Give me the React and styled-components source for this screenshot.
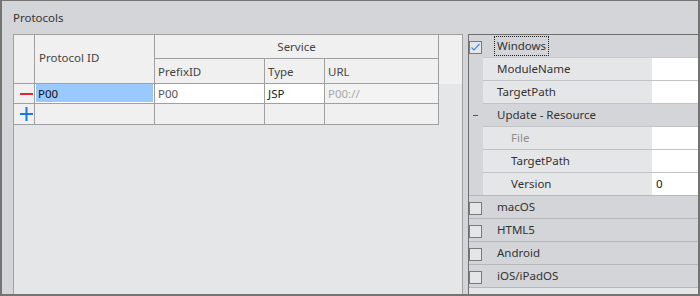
import React from 'react'
import styled, { createGlobalStyle } from 'styled-components'

const GlobalStyle = createGlobalStyle`
  html, body { margin: 0; padding: 0; background: #d4d5d8; }
  body { font-family: "Noto Sans", "Open Sans", sans-serif; font-size: 11.5px; }
  * { box-sizing: border-box; }
`

const Frame = styled.div`
  width: 700px;
  height: 296px;
  display: flex;
  flex-direction: column;
  background: #d4d5d8;
  border-style: solid;
  border-color: #747474;
  border-width: 1px 2px 2px 2px;
  overflow: hidden;
`
const Title = styled.div`
  height: 33px;
  flex: none;
  display: flex;
  align-items: center;
  padding-left: 11px;
  padding-bottom: 1px;
  color: #333;
`
const Body = styled.div`
  flex: 1;
  display: flex;
  min-height: 0;
`

/* left data grid */
const GridBox = styled.div`
  width: 450px;
  margin-left: 11px;
  margin-right: 5px;
  flex: none;
  background: #e5e6e8;
  border: 1px solid #a0a0a0;
  border-bottom: none;
`
const Table = styled.div`
  display: grid;
  grid-template-columns: 21px 120px 110px 60px 114px 23px;
  grid-template-rows: 24px 25px 20px 21px;
`
const Cell = styled.div`
  grid-column: ${p => p.col};
  grid-row: ${p => p.row};
  background: ${p => p.bg || '#f0f0f0'};
  border-right: ${p => (p.noRight ? 'none' : '1px solid #a0a0a0')};
  border-bottom: ${p => (p.noBottom ? 'none' : '1px solid #a0a0a0')};
  display: flex;
  align-items: center;
  justify-content: ${p => (p.center ? 'center' : 'flex-start')};
  padding-left: ${p => (p.center ? 0 : p.pad || 3)}px;
  padding-bottom: ${p => p.lift || 0}px;
  color: ${p => p.color || '#444'};
  white-space: nowrap;
`
const SelectedCell = styled(Cell)`
  padding: 0 1px 1px 1px;
  align-items: stretch;
`
const Highlight = styled.div`
  flex: 1;
  background: #99c9ff;
  color: #111;
  padding-left: 2px;
  display: flex;
  align-items: center;
`
const MinusBar = styled.span`
  width: 13px;
  height: 2px;
  background: #e2262f;
  margin-left: 3px;
`

/* right property panel */
const Props = styled.div`
  flex: 1;
  display: flex;
  flex-direction: column;
  background: #e5e6e8;
  border-left: 1px solid #6e6e6e;
  border-top: 1px solid #6e6e6e;
`
const Row = styled.div`
  height: 23px;
  flex: none;
  display: flex;
  background: #d4d5d8;
  border-bottom: ${p => (p.full ? '1px solid #b6b7ba' : 'none')};
`
const Gutter = styled.div`
  width: 14px;
  flex: none;
  display: flex;
  align-items: flex-start;
  padding-top: ${p => p.top || 0}px;
`
const Main = styled.div`
  flex: 1;
  display: flex;
  border-bottom: ${p => (p.full ? 'none' : `1px solid ${p.line || '#c2c3c6'}`)};
`
const GroupLabel = styled.div`
  flex: 1;
  display: flex;
  align-items: center;
  padding-left: 14px;
  padding-bottom: 1px;
  color: #333;
`
const Focus = styled.span`
  border: 1px dotted #222;
  padding: 1px 2px 2px;
  margin-left: -3px;
`
const Name = styled.div`
  width: 169px;
  flex: none;
  display: flex;
  align-items: center;
  background: #e5e6e8;
  padding-left: ${p => p.depth * 14}px;
  padding-bottom: 1px;
  color: ${p => (p.disabled ? '#8e8e8e' : '#333')};
`
const Value = styled.div`
  flex: 1;
  display: flex;
  align-items: center;
  background: #fff;
  padding-left: 4px;
  padding-bottom: 1px;
  color: #222;
`
const Dash = styled.span`
  width: 5px;
  height: 1px;
  background: #555;
  margin: 11px 0 0 4px;
`

const Check = ({ on }) => (
  <svg width="13" height="13" viewBox="0 0 13 13">
    <rect x="0.5" y="0.5" width="12" height="12" fill="#e6e6e7" stroke="#7a7a7a" />
    {on && <path d="M2.5 6.5 L5 9 L10.5 3" fill="none" stroke="#3b8ef0" strokeWidth="1.2" />}
  </svg>
)

const Plus = () => (
  <svg width="13" height="14" viewBox="0 0 13 14" style={{ marginLeft: 3 }}>
    <rect x="0" y="6" width="13" height="2" fill="#1a78d8" />
    <rect x="5.5" y="0" width="2" height="14" fill="#1a78d8" />
  </svg>
)

const Group = ({ label, on, focus, full }) => (
  <Row full={full}>
    <Gutter top={6}><Check on={on} /></Gutter>
    <Main full={full} line="#c8c9cc">
      <GroupLabel>
        {focus ? <Focus>{label}</Focus> : label}
      </GroupLabel>
    </Main>
  </Row>
)

const Prop = ({ name, value, depth = 1, disabled, full }) => (
  <Row full={full}>
    <Gutter />
    <Main full={full}>
      <Name depth={depth} disabled={disabled}>{name}</Name>
      <Value>{value}</Value>
    </Main>
  </Row>
)

const platforms = ['macOS', 'HTML5', 'Android', 'iOS/iPadOS']

export default function App() {
  return (
    <>
      <GlobalStyle />
      <Frame>
        <Title>Protocols</Title>
        <Body>
          <GridBox>
            <Table>
              <Cell col="1" row="1 / 3" />
              <Cell col="2" row="1 / 3" pad={4} lift={3}>Protocol ID</Cell>
              <Cell col="3 / 6" row="1" center lift={1}>Service</Cell>
              <Cell col="6" row="1 / 3" noRight noBottom />
              <Cell col="3" row="2">PrefixID</Cell>
              <Cell col="4" row="2">Type</Cell>
              <Cell col="5" row="2">URL</Cell>

              <Cell col="1" row="3"><MinusBar /></Cell>
              <SelectedCell col="2" row="3" bg="#fff"><Highlight>P00</Highlight></SelectedCell>
              <Cell col="3" row="3" bg="#fff" color="#555">P00</Cell>
              <Cell col="4" row="3" bg="#fff" color="#222">JSP</Cell>
              <Cell col="5" row="3" bg="#f3f3f3" color="#a8a8a8">P00://</Cell>

              <Cell col="1" row="4"><Plus /></Cell>
              <Cell col="2" row="4" />
              <Cell col="3" row="4" />
              <Cell col="4" row="4" />
              <Cell col="5" row="4" />
            </Table>
          </GridBox>

          <Props>
            <Group label="Windows" on focus />
            <Prop name="ModuleName" />
            <Prop name="TargetPath" />
            <Row>
              <Gutter><Dash /></Gutter>
              <Main>
                <GroupLabel>Update - Resource</GroupLabel>
              </Main>
            </Row>
            <Prop name="File" depth={2} disabled />
            <Prop name="TargetPath" depth={2} />
            <Prop name="Version" depth={2} value="0" full />
            {platforms.map(p => (
              <Group key={p} label={p} full />
            ))}
          </Props>
        </Body>
      </Frame>
    </>
  )
}
